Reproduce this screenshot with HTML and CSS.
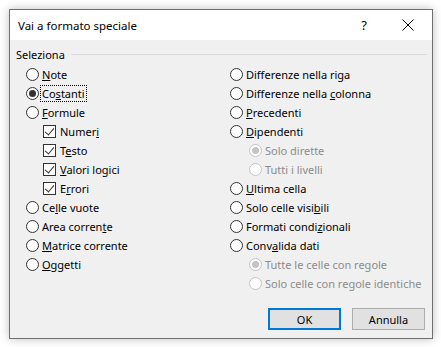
FILE: index.html
```html
<!DOCTYPE html>
<html lang="it">
<head>
    <meta charset="UTF-8">
    <title>Vai a formato speciale</title>
    <link rel="stylesheet" href="styles.css">
</head>
<body>
    <div class="dialog">
        <div class="title-bar">
            <span class="title">Vai a formato speciale</span>
            <span class="help">?</span>
            <span class="close">
                <svg width="12" height="12" viewBox="0 0 12 12" fill="none" stroke="#000" stroke-width="1">
                    <line x1="0.5" y1="0.5" x2="11.5" y2="11.5"></line>
                    <line x1="11.5" y1="0.5" x2="0.5" y2="11.5"></line>
                </svg>
            </span>
        </div>
        <div class="content">
            <div class="group-header">
                <span>Seleziona</span>
                <div class="group-line"></div>
            </div>
            <div class="columns">
                <div class="column">
                    <div class="row"><span class="radio"></span><span class="label"><u>N</u>ote</span></div>
                    <div class="row"><span class="radio checked"></span><span class="label focused">Co<u>s</u>tanti</span></div>
                    <div class="row"><span class="radio"></span><span class="label"><u>F</u>ormule</span></div>
                    <div class="row sub"><span class="check"></span><span class="label">Numer<u>i</u></span></div>
                    <div class="row sub"><span class="check"></span><span class="label">T<u>e</u>sto</span></div>
                    <div class="row sub"><span class="check"></span><span class="label"><u>V</u>alori logici</span></div>
                    <div class="row sub"><span class="check"></span><span class="label">E<u>r</u>rori</span></div>
                    <div class="row"><span class="radio"></span><span class="label">Ce<u>l</u>le vuote</span></div>
                    <div class="row"><span class="radio"></span><span class="label">Area corren<u>t</u>e</span></div>
                    <div class="row"><span class="radio"></span><span class="label"><u>M</u>atrice corrente</span></div>
                    <div class="row"><span class="radio"></span><span class="label"><u>O</u>ggetti</span></div>
                </div>
                <div class="column">
                    <div class="row"><span class="radio"></span><span class="label">Differenze nella ri<u>g</u>a</span></div>
                    <div class="row"><span class="radio"></span><span class="label">Differenze nella <u>c</u>olonna</span></div>
                    <div class="row"><span class="radio"></span><span class="label"><u>P</u>recedenti</span></div>
                    <div class="row"><span class="radio"></span><span class="label"><u>D</u>ipendenti</span></div>
                    <div class="row sub disabled"><span class="radio checked"></span><span class="label">Solo dirette</span></div>
                    <div class="row sub disabled"><span class="radio"></span><span class="label">Tutti i livelli</span></div>
                    <div class="row"><span class="radio"></span><span class="label"><u>U</u>ltima cella</span></div>
                    <div class="row"><span class="radio"></span><span class="label">Solo celle visi<u>b</u>ili</span></div>
                    <div class="row"><span class="radio"></span><span class="label">Formati condi<u>z</u>ionali</span></div>
                    <div class="row"><span class="radio"></span><span class="label">Conv<u>a</u>lida dati</span></div>
                    <div class="row sub disabled"><span class="radio checked"></span><span class="label">Tutte le celle con regole</span></div>
                    <div class="row sub disabled"><span class="radio"></span><span class="label">Solo celle con regole identiche</span></div>
                </div>
            </div>
            <div class="buttons">
                <button class="btn default">OK</button>
                <button class="btn">Annulla</button>
            </div>
        </div>
    </div>
</body>
</html>
```

FILE: styles.css
```css
* {
    margin: 0;
    padding: 0;
    box-sizing: border-box;
}

body {
    background: #ffffff;
    font-family: "Noto Sans", "Segoe UI", sans-serif;
    font-size: 11px;
    color: #000;
    padding: 9px;
}

.dialog {
    width: 424px;
    height: 330px;
    border: 1px solid #6f6f6f;
    background: #f0f0f0;
    box-shadow: 0 0 9px rgba(0, 0, 0, 0.25);
    display: flex;
    flex-direction: column;
}

.title-bar {
    height: 30px;
    background: #ffffff;
    display: flex;
    align-items: center;
    padding-left: 8px;
}

.title {
    flex: 1;
    font-size: 11.5px;
}

.help {
    width: 20px;
    text-align: center;
    font-size: 13px;
    margin-right: 28px;
}

.close {
    width: 12px;
    height: 12px;
    display: flex;
    margin-right: 18px;
}

.content {
    flex: 1;
    display: flex;
    flex-direction: column;
    padding: 6px 5px 8px 6px;
}

.group-header {
    display: flex;
    align-items: center;
    gap: 6px;
    height: 17px;
}

.group-line {
    flex: 1;
    height: 1px;
    background: #dcdcdc;
}

.columns {
    display: flex;
    padding-left: 10px;
    padding-top: 2px;
}

.column {
    flex: 1;
    white-space: nowrap;
}

.column:first-child {
    flex: none;
    width: 204px;
}

.row {
    height: 19px;
    display: flex;
    align-items: center;
}

.row.sub {
    padding-left: 17px;
}

.column:last-child .row.sub {
    padding-left: 19px;
}

.radio {
    flex: none;
    width: 13px;
    height: 13px;
    border: 1px solid #333;
    border-radius: 50%;
    background: #fff;
    margin-right: 3px;
    display: flex;
    align-items: center;
    justify-content: center;
}

.radio.checked::after {
    content: "";
    width: 7px;
    height: 7px;
    border-radius: 50%;
    background: #333;
}

.check {
    flex: none;
    width: 13px;
    height: 13px;
    border: 1px solid #333;
    background: #fff;
    margin-right: 4px;
    position: relative;
}

.check::after {
    content: "";
    position: absolute;
    left: 3px;
    top: 0px;
    width: 4px;
    height: 8px;
    border-right: 1px solid #333;
    border-bottom: 1px solid #333;
    transform: rotate(40deg);
}

.disabled .label {
    color: #8c8c8c;
}

.disabled .radio {
    border-color: #c4c4c4;
}

.disabled .radio.checked::after {
    background: #c4c4c4;
}

.label.focused {
    outline: 1px dotted #000;
    outline-offset: 0;
    padding: 0 1px;
    margin-left: -1px;
}

.buttons {
    margin-top: auto;
    display: flex;
    justify-content: flex-end;
    gap: 11px;
    padding-right: 2px;
}

.btn {
    width: 73px;
    height: 22px;
    font-family: inherit;
    font-size: 11px;
    background: #e1e1e1;
    border: 1px solid #adadad;
    color: #000;
}

.btn.default {
    border: 2px solid #0078d7;
}
```
